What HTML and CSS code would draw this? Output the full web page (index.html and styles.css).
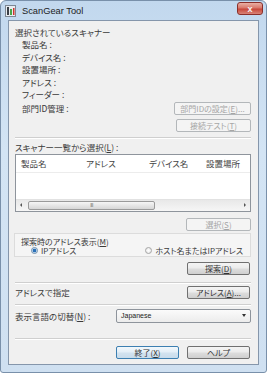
FILE: index.html
```html
<!DOCTYPE html>
<html lang="ja">
<head>
<meta charset="UTF-8">
<meta name="viewport" content="width=device-width, initial-scale=1.0">
<title>ScanGear Tool</title>
<link rel="stylesheet" href="styles.css">
</head>
<body>
<div class="window">
  <div class="titlebar">
    <svg class="app-icon" width="11" height="12" viewBox="0 0 11 12">
      <rect x="0.5" y="0.5" width="10" height="11" fill="#e9edf1" stroke="#7d8793"/>
      <rect x="2" y="2" width="2" height="8" fill="#3a3f46"/>
      <rect x="5" y="4" width="2" height="6" fill="#4aa548"/>
      <rect x="8" y="3" width="1.5" height="7" fill="#d2342d"/>
    </svg>
    <span class="title">ScanGear Tool</span>
    <div class="close">x</div>
  </div>

  <div class="client">
    <div class="heading">選択されているスキャナー</div>
    <div class="info">
      <div class="info-row">製品名 :</div>
      <div class="info-row">デバイス名 :</div>
      <div class="info-row">設置場所 :</div>
      <div class="info-row">アドレス :</div>
      <div class="info-row">フィーダー :</div>
      <div class="info-row with-btn">
        <span>部門ID管理 :</span>
        <button class="btn btn-dept" disabled>部門IDの設定(<u>E</u>)...</button>
      </div>
    </div>
    <div class="btn-row">
      <button class="btn btn-test" disabled>接続テスト(<u>T</u>)</button>
    </div>

    <div class="sep sep-first"></div>

    <div class="list-label">スキャナー一覧から選択(<u>L</u>) :</div>
    <div class="listbox">
      <div class="list-head">
        <span>製品名</span>
        <span>アドレス</span>
        <span>デバイス名</span>
        <span>設置場所</span>
      </div>
      <div class="list-body"></div>
      <div class="hscroll">
        <span class="arrow arrow-left"></span>
        <div class="track">
          <div class="thumb">III</div>
        </div>
        <span class="arrow arrow-right"></span>
      </div>
    </div>
    <div class="btn-row btn-row-select">
      <button class="btn btn-small" disabled>選択(<u>S</u>)</button>
    </div>

    <div class="group">
      <div class="group-title">探索時のアドレス表示(<u>M</u>)</div>
      <div class="radios">
        <label class="radio checked"><span class="dot"></span>IPアドレス</label>
        <label class="radio"><span class="dot"></span>ホスト名またはIPアドレス</label>
      </div>
    </div>
    <div class="btn-row btn-row-search">
      <button class="btn btn-small">探索(<u>D</u>)</button>
    </div>

    <div class="sep sep-address"></div>

    <div class="form-row row-address">
      <span>アドレスで指定</span>
      <button class="btn btn-small">アドレス(<u>A</u>)...</button>
    </div>

    <div class="sep sep-lang"></div>

    <div class="form-row row-lang">
      <span>表示言語の切替(<u>N</u>) :</span>
      <div class="select">
        <span>Japanese</span>
        <span class="caret"></span>
      </div>
    </div>

    <div class="sep sep-bottom"></div>

    <div class="footer">
      <button class="btn btn-small btn-default">終了(<u>X</u>)</button>
      <button class="btn btn-small">ヘルプ</button>
    </div>
  </div>
</div>
</body>
</html>
```

FILE: styles.css
```css
body {
  margin: 0;
  padding: 0;
  background-color: #fff;
  font-family: "Noto Sans CJK JP", "Noto Sans", sans-serif;
  font-size: 8.5px;
  color: #3a3a3a;
  font-feature-settings: "palt";
}
.window {
  box-sizing: border-box;
  width: 267px;
  height: 373px;
  padding: 0 7px 7px 7px;
  border: 1px solid #7990aa;
  border-radius: 6px 6px 3px 3px;
  background: linear-gradient(to bottom, #c2d8ee 0%, #d3e4f4 40%, #cfe0f1 100%);
  display: flex;
  flex-direction: column;
}
.titlebar {
  height: 19px;
  display: flex;
  align-items: center;
  position: relative;
  margin-left: -3px;
}
.app-icon {
  margin-right: 6px;
}
.title {
  font-family: "Liberation Sans", Arial, sans-serif;
  font-size: 9.3px;
  color: #1c1c1c;
}
.close {
  position: absolute;
  top: 1px;
  right: -4px;
  width: 26px;
  height: 13px;
  border: 1px solid #8a2f2a;
  border-radius: 3px;
  background: linear-gradient(to bottom, #e8b0a4 0%, #d9776a 45%, #c7473a 55%, #d98377 100%);
  color: #f4f4f4;
  font-family: "Liberation Sans", Arial, sans-serif;
  font-size: 9px;
  font-weight: bold;
  text-align: center;
  line-height: 12px;
  box-sizing: border-box;
}
.client {
  flex: 1;
  background-color: #f0f0f0;
  border: 1px solid #8596ab;
  padding: 5px 7px 0 6px;
}
.heading {
  line-height: 12px;
}
.info {
  padding-left: 7px;
}
.info-row {
  line-height: 12.5px;
  height: 12.5px;
}
.info-row.with-btn {
  height: 15px;
  display: flex;
  align-items: center;
  justify-content: space-between;
  margin-left: -7px;
  padding-left: 7px;
}
.btn {
  box-sizing: border-box;
  height: 13px;
  padding: 0;
  border: 1px solid #707070;
  border-radius: 2px;
  background: linear-gradient(to bottom, #f4f4f4 0%, #ebebeb 48%, #dddddd 52%, #cfcfcf 100%);
  font-family: "Noto Sans CJK JP", "Noto Sans", sans-serif;
  font-size: 8px;
  line-height: 11px;
  color: #333333;
  font-feature-settings: "palt";
}
.btn:disabled {
  border-color: #b3b7ba;
  background: #f4f4f4;
  color: #a6a6a6;
}
.btn-dept {
  width: 77px;
}
.btn-test {
  width: 75px;
}
.btn-small {
  width: 63px;
}
.btn-default {
  border-color: #3c7fb1;
  background: linear-gradient(to bottom, #f2f8fc 0%, #e3eef7 48%, #d3e3ef 52%, #c8dcec 100%);
}
.btn-row {
  display: flex;
  justify-content: flex-end;
  margin-top: 3px;
}
.sep {
  height: 0;
  border-top: 1px solid #cfcfcf;
  border-bottom: 1px solid #ffffff;
}
.sep-first {
  margin-top: 5px;
}
.list-label {
  margin-top: 2px;
  line-height: 12px;
}
.listbox {
  margin-top: 1px;
  height: 58px;
  box-sizing: border-box;
  border: 1px solid #8e949c;
  background-color: #fff;
  display: flex;
  flex-direction: column;
}
.list-head {
  height: 17px;
  display: grid;
  grid-template-columns: 65px 63px 57px 1fr;
  padding-left: 5px;
  align-items: center;
  border-bottom: 1px solid #ececec;
  color: #444;
}
.list-body {
  flex: 1;
}
.hscroll {
  height: 11px;
  display: flex;
  align-items: center;
  background: linear-gradient(to bottom, #e8e8e8, #f6f6f6);
  border-top: 1px solid #e2e2e2;
}
.arrow {
  width: 0;
  height: 0;
  border-top: 2px solid transparent;
  border-bottom: 2px solid transparent;
}
.arrow-left {
  border-right: 2px solid #555;
  margin: 0 4px 0 4px;
}
.arrow-right {
  border-left: 2px solid #555;
  margin: 0 4px 0 4px;
}
.track {
  flex: 1;
  height: 9px;
}
.thumb {
  box-sizing: border-box;
  width: 127px;
  height: 9px;
  margin-left: 2px;
  border: 1px solid #9a9a9a;
  border-radius: 2px;
  background: linear-gradient(to bottom, #f6f6f6 0%, #e6e6e6 50%, #d6d6d6 100%);
  font-family: "Liberation Sans", Arial, sans-serif;
  font-size: 5px;
  line-height: 7px;
  color: #666;
  text-align: center;
  letter-spacing: -0.5px;
}
.btn-row-select {
  margin-top: 6px;
}
.btn-row-select .btn {
  width: 65px;
}
.group {
  margin-top: 2px;
  margin-left: -1px;
  border: 1px solid #dcdcdc;
  background-color: #f5f5f5;
  padding: 3px 0 0 6px;
  font-size: 8px;
}
.group-title {
  line-height: 9.5px;
}
.radios {
  display: flex;
  line-height: 9.5px;
  padding-left: 10px;
}
.radio {
  display: flex;
  align-items: center;
}
.radio + .radio {
  margin-left: 69px;
}
.dot {
  box-sizing: border-box;
  width: 7px;
  height: 7px;
  border-radius: 50%;
  border: 1px solid #a5a5a5;
  background: radial-gradient(circle, #ffffff 0%, #e4e4e4 100%);
  margin-right: 3px;
}
.radio.checked .dot {
  border-color: #6d8fae;
  background: radial-gradient(circle, #2a70b8 0%, #2a70b8 45%, #cfe0ef 60%);
}
.btn-row-search {
  margin-top: 5px;
}
.btn-row-search .btn,
.row-address .btn,
.footer .btn {
  margin-right: 1px;
}
.sep-address {
  margin-top: 7px;
}
.form-row {
  display: flex;
  align-items: center;
  justify-content: space-between;
}
.row-address {
  margin-top: 2px;
}
.sep-lang {
  margin-top: 5px;
}
.row-lang {
  margin-top: 3px;
}
.select {
  box-sizing: border-box;
  width: 135px;
  height: 14px;
  border: 1px solid #8e949c;
  border-radius: 2px;
  background: linear-gradient(to bottom, #fbfbfb, #ececec);
  display: flex;
  align-items: center;
  justify-content: space-between;
  padding: 0 4px 0 4px;
  font-family: "Liberation Sans", Arial, sans-serif;
  font-size: 7px;
  color: #222;
}
.caret {
  width: 0;
  height: 0;
  border-left: 2px solid transparent;
  border-right: 2px solid transparent;
  border-top: 3px solid #333;
}
.sep-bottom {
  margin-top: 15px;
}
.footer {
  display: flex;
  justify-content: flex-end;
  gap: 7px;
  margin-top: 6px;
}
```
